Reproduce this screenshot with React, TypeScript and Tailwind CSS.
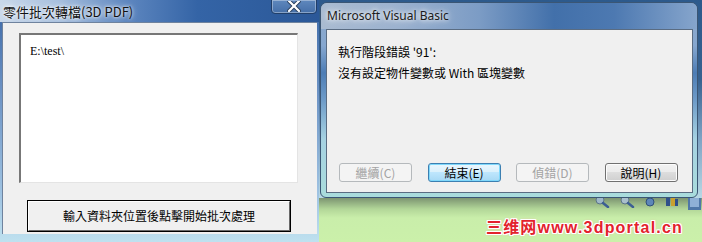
import React from "react";

const cjk = "font-['Noto_Sans_CJK_TC',sans-serif]";

function DlgButton({ label, kind }: { label: string; kind: "disabled" | "focus" | "normal" }) {
  const styles = {
    disabled: "border-[#b5b9bc] bg-[#f4f4f4] text-[#a3a3a3]",
    focus:
      "border-[#3c7fb1] bg-[linear-gradient(180deg,#eaf6fd_0%,#d9f0fc_50%,#bee6fd_50%,#a7d9f5_100%)] text-black shadow-[inset_0_0_0_1px_#7fd8fb]",
    normal:
      "border-[#707070] bg-[linear-gradient(180deg,#f2f2f2_0%,#ebebeb_50%,#dddddd_50%,#cfcfcf_100%)] text-black shadow-[inset_0_0_0_1px_#fcfcfc]",
  }[kind];
  return (
    <div
      className={`w-[73px] h-[19px] rounded-[3px] border flex items-center justify-center text-[12px] leading-none ${styles}`}
    >
      {label}
    </div>
  );
}

function LeftWindow() {
  return (
    <div className="relative w-[319px] h-full flex flex-col bg-[linear-gradient(180deg,#3a67a6_0%,#6f95c6_40%,#9fc3e2_80%,#bfe1ef_100%)]">
      <div className="h-[22px] flex items-center pl-[3px] bg-[linear-gradient(90deg,#c9d8ea_0%,#a8c0de_18%,#5d86bf_40%,#3464a6_62%,#2b5898_100%)]">
        <span className={`${cjk} text-[13px] leading-none text-[#111] [text-shadow:0_0_6px_#fff,0_0_3px_#fff]`}>
          零件批次轉檔(3D PDF)
        </span>
      </div>
      <div className="absolute right-[2px] top-[-1px] w-[46px] h-[15px] rounded-b-[4px] border border-[#213f69] bg-[linear-gradient(180deg,#5f88bd_0%,#456fa8_100%)] shadow-[inset_0_0_0_1px_rgba(255,255,255,0.35)] flex items-center justify-center">
        <svg width="14" height="11" viewBox="0 0 14 11">
          <path d="M2 0 L12 10 M12 0 L2 10" stroke="#2a3f5c" strokeWidth="4" strokeLinecap="round" />
          <path d="M2 0 L12 10 M12 0 L2 10" stroke="#fff" strokeWidth="2.2" strokeLinecap="round" />
        </svg>
      </div>
      <div className="ml-[2px] w-[315px] h-[212px] bg-[#f0f0f0] border-l border-t border-[#6f839e] flex flex-col">
        <div className="ml-[16px] mt-[10px] w-[279px] h-[150px] bg-white border-t-2 border-l-2 border-t-[#777] border-l-[#777] border-r border-b border-r-[#e4e4e4] border-b-[#e4e4e4] pl-[9px] pt-[2px]">
          <span className="font-['Liberation_Serif',serif] text-[12px] leading-[14px] text-black">E:\test\</span>
        </div>
        <div className="ml-[24px] mt-[17px] w-[264px] h-[32px] border border-black bg-[#f0f0f0]">
          <div className="h-full border border-t-white border-l-white border-r-[#696969] border-b-[#696969] flex items-center justify-center">
            <span className={`${cjk} text-[12px] leading-none text-black`}>輸入資料夾位置後點擊開始批次處理</span>
          </div>
        </div>
      </div>
    </div>
  );
}

function VbDialog() {
  return (
    <div className="w-[378px] h-[196px] rounded-t-[7px] rounded-b-[6px] border border-[#3b5674] flex flex-col bg-[linear-gradient(180deg,#8ea9cb_0%,#86a7cf_22%,#4d7db5_36%,#6e9bc8_50%,#a6d2e2_70%,#a9dcdc_100%)] overflow-hidden">
      <div className="h-[26px] flex items-center pl-[6px] bg-[linear-gradient(90deg,#a9bbd1_0%,#9cb2cf_20%,#7c9cc5_42%,#4270aa_62%,#4d79b1_78%,#86a5cc_100%)]">
        <span className="font-['Noto_Sans',sans-serif] text-[12px] leading-none text-[#1b1b1b] [text-shadow:0_0_8px_#fff,0_0_4px_#fff]">
          Microsoft Visual Basic
        </span>
      </div>
      <div className="ml-[5px] w-[367px] h-[164px] bg-[#f0f0f0] border border-[#5a6c82] flex flex-col">
        <div className={`${cjk} pl-[11px] pt-[11px] text-[12px] leading-[21px] text-black`}>
          <div>執行階段錯誤 '91':</div>
          <div>沒有設定物件變數或 With 區塊變數</div>
        </div>
        <div className={`${cjk} mt-auto mb-[10px] ml-[12px] flex gap-[15.5px]`}>
          <DlgButton label="繼續(C)" kind="disabled" />
          <DlgButton label="結束(E)" kind="focus" />
          <DlgButton label="偵錯(D)" kind="disabled" />
          <DlgButton label="說明(H)" kind="normal" />
        </div>
      </div>
    </div>
  );
}

function TrayIcons() {
  return (
    <div className="flex items-start gap-[9px] pr-[1px]">
      <svg width="16" height="10" viewBox="0 0 16 10">
        <circle cx="6" cy="2" r="4" fill="#9fb8c8" stroke="#5b7488" strokeWidth="1" />
        <path d="M9 5 L14 9" stroke="#3d5f93" strokeWidth="2.5" strokeLinecap="round" />
      </svg>
      <svg width="16" height="10" viewBox="0 0 16 10">
        <circle cx="6" cy="2" r="4" fill="#a9bfcc" stroke="#5b7488" strokeWidth="1" />
        <path d="M9 5 L14 9" stroke="#3d5f93" strokeWidth="2.5" strokeLinecap="round" />
      </svg>
      <svg width="12" height="10" viewBox="0 0 12 10">
        <circle cx="6" cy="4" r="4" fill="#5d86b8" stroke="#2f4f7a" strokeWidth="1" />
      </svg>
      <svg width="14" height="10" viewBox="0 0 14 10">
        <rect x="1" y="0" width="4" height="8" fill="#2f4f8a" />
        <rect x="6" y="0" width="4" height="8" fill="#c8a030" />
        <rect x="10" y="1" width="3" height="7" fill="#2f4f8a" />
      </svg>
      <svg width="13" height="12" viewBox="0 0 13 12">
        <rect x="0" y="0" width="13" height="12" fill="#4f77a8" />
        <rect x="2" y="0" width="9" height="9" fill="#8fb0d6" />
      </svg>
    </div>
  );
}

export default function App() {
  return (
    <div className="w-[702px] h-[242px] overflow-hidden flex bg-[#2d5a8c]">
      <LeftWindow />
      <div className="flex-1 flex flex-col">
        <div className="pl-[1px] pt-[2px] pr-[4px] bg-[linear-gradient(180deg,#2d5a8c_0%,#37618f_40%,#7ea3c4_70%,#b8d8e4_100%)]">
          <VbDialog />
        </div>
        <div className="flex-1 flex flex-col bg-[linear-gradient(180deg,#7c9471_0%,#b2d698_25%,#c9eeaa_45%,#cbf0aa_100%)]">
          <div className="flex justify-end h-[14px]">
            <TrayIcons />
          </div>
          <div className="flex justify-end pr-[19px] mt-[8px]">
            <span className="font-['Liberation_Sans','Noto_Sans_CJK_SC',sans-serif] font-bold text-[16px] leading-[16px] tracking-[1.2px] text-[#e3222c] [text-shadow:1px_0_0_#fff,-1px_0_0_#fff,0_1px_0_#fff,0_-1px_0_#fff,1px_1px_0_#fff,-1px_-1px_0_#fff,1px_-1px_0_#fff,-1px_1px_0_#fff,0_0_3px_#f7a0a8]">
              三维网www.3dportal.cn
            </span>
          </div>
        </div>
      </div>
    </div>
  );
}
